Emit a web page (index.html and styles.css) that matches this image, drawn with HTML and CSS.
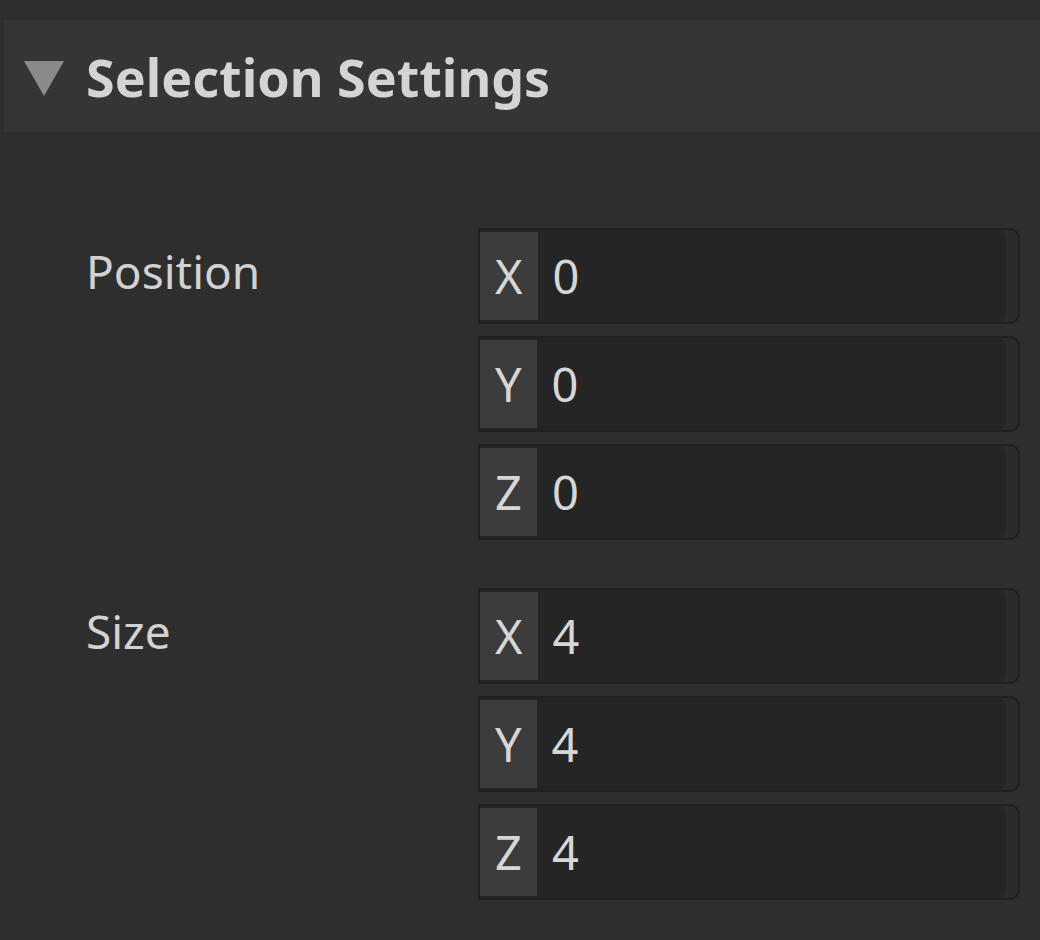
FILE: index.html
```html
<!DOCTYPE html>
<html lang="en">
<head>
  <meta charset="UTF-8" />
  <title>Selection Settings</title>
  <link rel="stylesheet" href="styles.css">
</head>
<body>
  <!-- section header -->
  <div class="section-header">
    <span class="caret"></span>
    <h2 class="section-title">Selection Settings</h2>
  </div>

  <div class="props">
    <!-- Position -->
    <div class="prop">
      <label class="prop-label">Position</label>
      <div class="fields">
        <div class="field"><span class="axis">X</span><input class="value" value="0" /></div>
        <div class="field"><span class="axis">Y</span><input class="value" value="0" /></div>
        <div class="field"><span class="axis">Z</span><input class="value" value="0" /></div>
      </div>
    </div>

    <!-- Size -->
    <div class="prop">
      <label class="prop-label">Size</label>
      <div class="fields">
        <div class="field"><span class="axis">X</span><input class="value" value="4" /></div>
        <div class="field"><span class="axis">Y</span><input class="value" value="4" /></div>
        <div class="field"><span class="axis">Z</span><input class="value" value="4" /></div>
      </div>
    </div>
  </div>
</body>
</html>
```

FILE: styles.css
```css
    body {
      margin: 0;
      background: #2e2e2e;
      color: #d2d2d2;
      font-family: "Noto Sans", "Open Sans", sans-serif;
    }

    .section-header {
      display: flex;
      align-items: center;
      height: 112px;
      margin: 20px 0 0 4px;
      padding-left: 20px;
      background: #353535;
    }
    .caret {
      width: 0;
      height: 0;
      border-left: 20px solid transparent;
      border-right: 20px solid transparent;
      border-top: 35px solid #8a8a8a;
      margin-right: 22px;
      margin-top: 4px;
    }
    .section-title {
      margin: 0;
      font-size: 52px;
      font-weight: 700;
      color: #d4d4d4;
    }

    .props {
      padding: 96px 20px 0 86px;
    }
    .prop {
      display: grid;
      grid-template-columns: 392px minmax(0, 1fr);
      margin-bottom: 48px;
    }
    .prop-label {
      font-size: 46px;
      line-height: 60px;
      padding-top: 13px;
    }
    .fields {
      display: flex;
      flex-direction: column;
      gap: 12px;
      min-width: 0;
    }
    .field {
      display: flex;
      height: 92px;
      background: #252525;
      border: 2px solid #202020;
      border-radius: 2px 10px 10px 2px;
      box-shadow: inset -12px 0 0 #2b2b2b;
      overflow: hidden;
    }
    .axis {
      display: flex;
      align-items: center;
      justify-content: center;
      padding: 0 15px;
      margin: 2px 0;
      background: #3c3c3c;
      font-size: 47px;
      color: #d6d6d6;
    }
    .value {
      flex: 1;
      min-width: 0;
      padding: 0 0 0 15px;
      border: none;
      outline: none;
      background: transparent;
      font-family: inherit;
      font-size: 47px;
      color: #d6d6d6;
    }
```
